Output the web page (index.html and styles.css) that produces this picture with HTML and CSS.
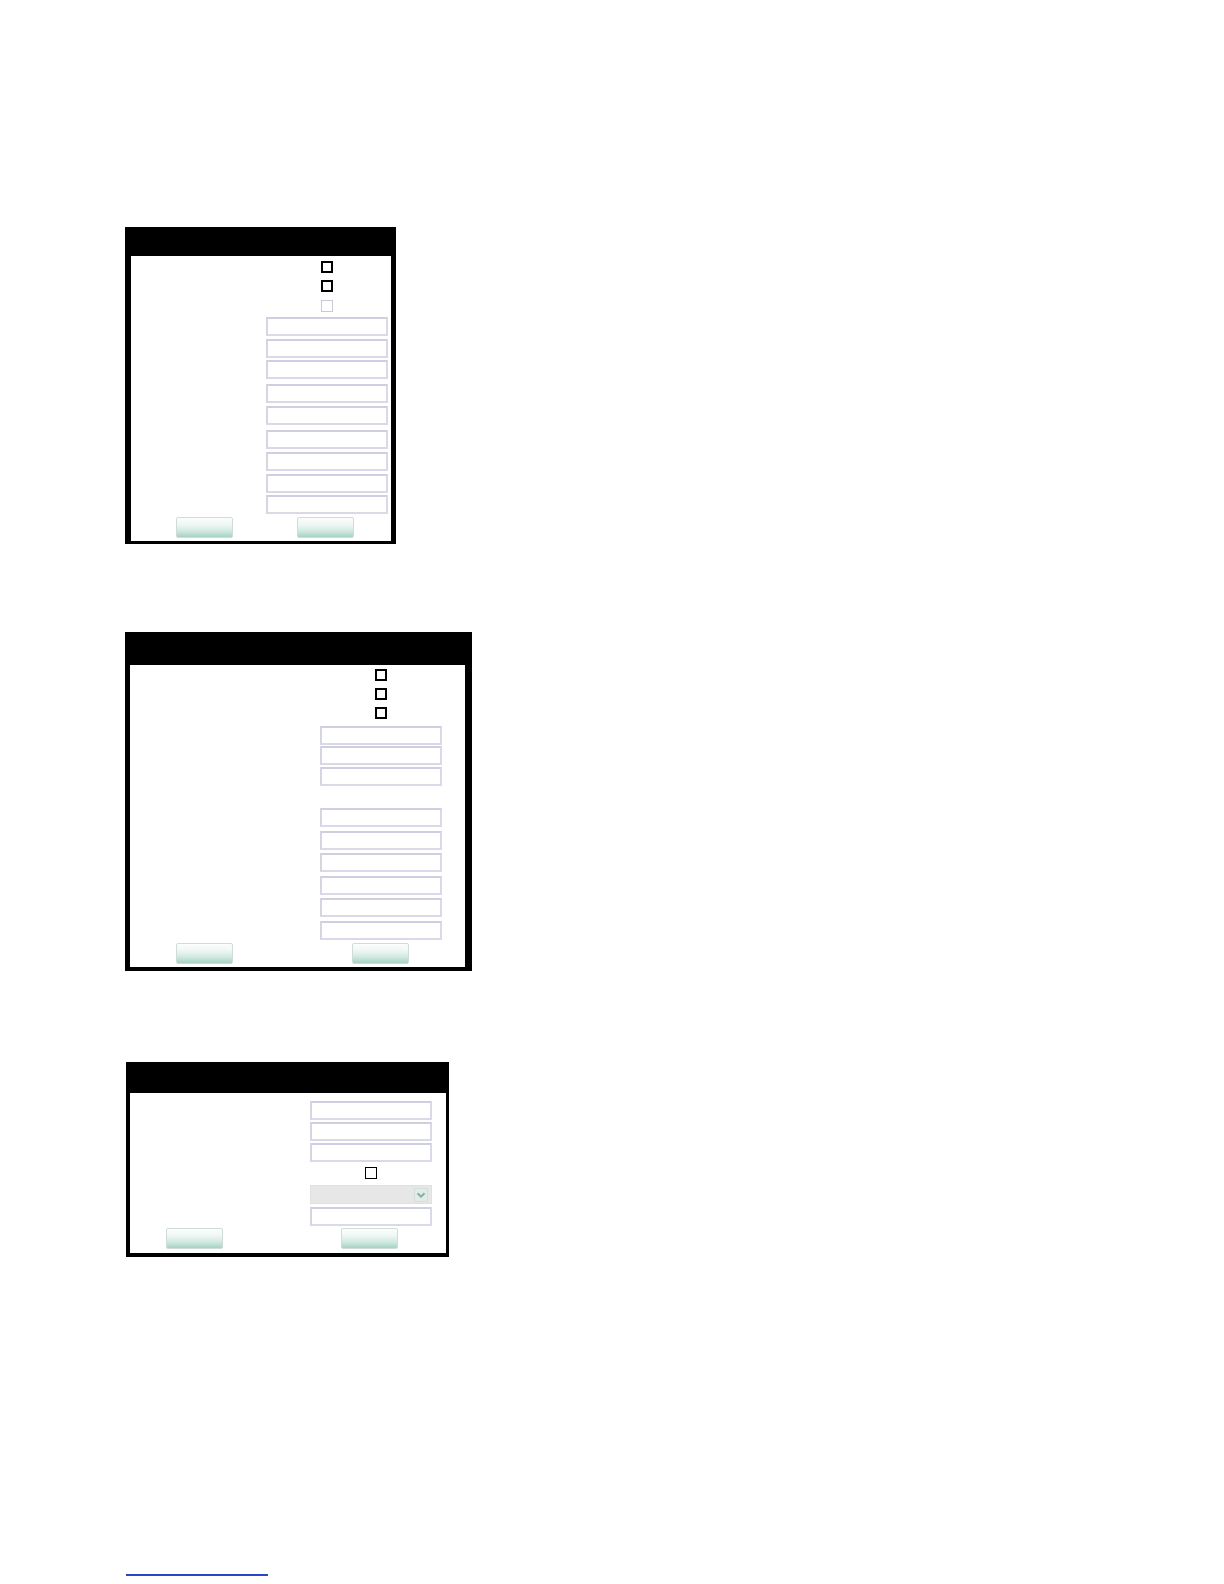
FILE: index.html
```html
<!DOCTYPE html>
<html lang="en">
<head>
<meta charset="utf-8">
<title>Forms</title>
<link rel="stylesheet" href="styles.css">
</head>
<body>
<div class="page">

  <form class="panel panel-a">
    <div class="panel-head"></div>
    <div class="panel-body">
      <div class="ctrl mt5"><span class="cb"></span></div>
      <div class="ctrl mt7"><span class="cb"></span></div>
      <div class="ctrl mt8"><span class="cb cb-off"></span></div>
      <input class="field mt5" type="text">
      <input class="field mt3" type="text">
      <input class="field mt2" type="text">
      <input class="field mt5" type="text">
      <input class="field mt3" type="text">
      <input class="field mt5" type="text">
      <input class="field mt3" type="text">
      <input class="field mt3" type="text">
      <input class="field mt2" type="text">
      <div class="actions mt3">
        <button class="btn" type="button"></button>
        <button class="btn" type="button"></button>
      </div>
    </div>
  </form>

  <form class="panel panel-b">
    <div class="panel-head"></div>
    <div class="panel-body">
      <div class="ctrl mt4"><span class="cb"></span></div>
      <div class="ctrl mt7"><span class="cb"></span></div>
      <div class="ctrl mt7"><span class="cb"></span></div>
      <input class="field mt7" type="text">
      <input class="field mt1" type="text">
      <input class="field mt2" type="text">
      <input class="field mt22" type="text">
      <input class="field mt4" type="text">
      <input class="field mt3" type="text">
      <input class="field mt4" type="text">
      <input class="field mt3" type="text">
      <input class="field mt4" type="text">
      <div class="actions mt3">
        <button class="btn" type="button"></button>
        <button class="btn" type="button"></button>
      </div>
    </div>
  </form>

  <form class="panel panel-c">
    <div class="panel-head"></div>
    <div class="panel-body">
      <input class="field mt8" type="text">
      <input class="field mt2" type="text">
      <input class="field mt2" type="text">
      <div class="ctrl mt5"><span class="cb cb-thin"></span></div>
      <div class="select mt6">
        <span class="select-arrow">
          <svg width="10" height="8" viewBox="0 0 10 8"><path d="M1.5 2.2 L5 5.6 L8.5 2.2" fill="none" stroke="#7db3a3" stroke-width="2"/></svg>
        </span>
      </div>
      <input class="field mt3" type="text">
      <div class="actions mt2">
        <button class="btn" type="button"></button>
        <button class="btn" type="button"></button>
      </div>
    </div>
  </form>

  <div class="footnote-rule"></div>
</div>
</body>
</html>
```

FILE: styles.css
```css
* { box-sizing: border-box; }

body {
  margin: 0;
  background: #ffffff;
  font-family: "Liberation Sans", Arial, sans-serif;
}

.page {
  padding-top: 227px;
  padding-bottom: 8px;
}

.panel {
  display: flex;
  flex-direction: column;
  background: #000000;
  margin: 0;
}

.panel-body {
  display: flex;
  flex-direction: column;
  align-items: flex-end;
  background: #ffffff;
}

/* panel A */
.panel-a {
  width: 271px;
  margin-left: 125px;
  padding: 0 5px 3px 6px;
}
.panel-a .panel-head { height: 29px; }
.panel-a .panel-body { padding-right: 3px; padding-bottom: 3px; }
.panel-a .actions { padding-left: 45px; gap: 64px; }

/* panel B */
.panel-b {
  width: 347px;
  margin-left: 125px;
  margin-top: 88px;
  padding: 0 7px 4px 5px;
}
.panel-b .panel-head { height: 33px; }
.panel-b .panel-body { padding-right: 23px; padding-bottom: 3px; }
.panel-b .actions { padding-left: 46px; gap: 119px; }

/* panel C */
.panel-c {
  width: 323px;
  margin-left: 126px;
  margin-top: 91px;
  padding: 0 3px 4px 4px;
}
.panel-c .panel-head { height: 31px; }
.panel-c .panel-body { padding-right: 14px; padding-bottom: 4px; }
.panel-c .actions { padding-left: 36px; gap: 118px; }

/* controls */
.ctrl {
  width: 122px;
  display: flex;
  justify-content: center;
}

.cb {
  display: block;
  width: 12px;
  height: 12px;
  border: 2px solid #000000;
  background: #ffffff;
}
.cb-off { border: 1px solid #c9c9d6; }
.cb-thin { border: 1.5px solid #000000; }

.field {
  display: block;
  width: 122px;
  height: 19px;
  margin-bottom: 0;
  margin-left: 0;
  margin-right: 0;
  padding: 0 3px;
  border: 2px solid #d9d9ea;
  border-top-color: #cfcfe2;
  border-left-color: #d6d6e2;
  background: #ffffff;
  font: 12px "Liberation Sans", Arial, sans-serif;
  outline: none;
}

.select {
  position: relative;
  width: 122px;
  height: 19px;
  background: #e7e7e7;
  border: 1px solid #e0e0e0;
}
.select-arrow {
  position: absolute;
  right: 3px;
  top: 2px;
  width: 14px;
  height: 14px;
  display: flex;
  align-items: center;
  justify-content: center;
  background: #e2ebe7;
  border: 1px solid #d4dfda;
}

.actions {
  align-self: stretch;
  display: flex;
}

.btn {
  width: 57px;
  height: 21px;
  padding: 0;
  border: 1px solid #cfdcd8;
  border-radius: 2px;
  background: linear-gradient(#fbfefd 0%, #eef7f4 35%, #cfe8e0 70%, #a6d2c5 100%);
  appearance: none;
}

.footnote-rule {
  margin-left: 126px;
  margin-top: 317px;
  width: 142px;
  height: 2px;
  background: #2b46c4;
}

/* spacing helpers */
.mt1 { margin-top: 1px; }
.mt2 { margin-top: 2px; }
.mt3 { margin-top: 3px; }
.mt4 { margin-top: 4px; }
.mt5 { margin-top: 5px; }
.mt6 { margin-top: 6px; }
.mt7 { margin-top: 7px; }
.mt8 { margin-top: 8px; }
.mt22 { margin-top: 22px; }
```
